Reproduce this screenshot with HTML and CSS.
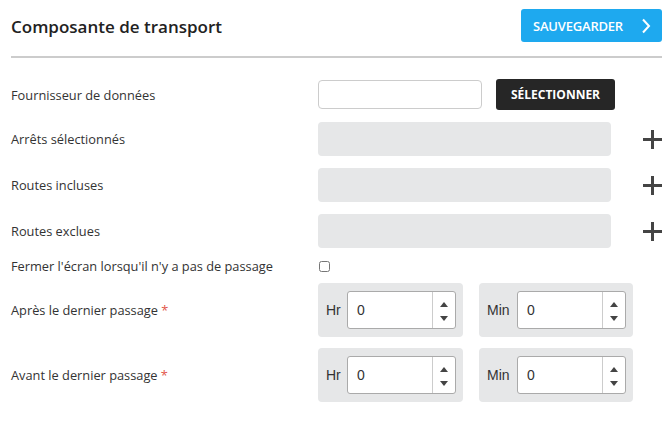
FILE: index.html
```html
<!doctype html>
<html lang="fr">
<head>
  <meta charset="utf-8">
  <title>Composante de transport</title>
  <link rel="stylesheet" href="styles.css">
</head>
<body>
  <div class="panel">
    <div class="panel-head">
      <div class="panel-title">Composante de transport</div>
      <button class="btn-save">SAUVEGARDER
        <svg width="10" height="16" viewBox="0 0 10 16"><path d="M2 1.5 L8 8 L2 14.5" fill="none" stroke="#fff" stroke-width="2"/></svg>
      </button>
    </div>

    <div class="form">
      <div class="row row-provider">
        <label>Fournisseur de données</label>
        <div class="ctrl">
          <input class="text-input" type="text">
          <button class="btn-select">SÉLECTIONNER</button>
        </div>
      </div>

      <div class="row row-list">
        <label>Arrêts sélectionnés</label>
        <div class="ctrl">
          <div class="list-box"></div>
          <span class="plus"></span>
        </div>
      </div>

      <div class="row row-list">
        <label>Routes incluses</label>
        <div class="ctrl">
          <div class="list-box"></div>
          <span class="plus"></span>
        </div>
      </div>

      <div class="row row-list">
        <label>Routes exclues</label>
        <div class="ctrl">
          <div class="list-box"></div>
          <span class="plus"></span>
        </div>
      </div>

      <div class="row row-check">
        <label>Fermer l'écran lorsqu'il n'y a pas de passage</label>
        <div class="ctrl">
          <input type="checkbox" class="check">
        </div>
      </div>

      <div class="row row-time">
        <label>Après le dernier passage <span class="req">*</span></label>
        <div class="ctrl">
          <div class="time-group">
            <span class="unit">Hr</span>
            <div class="spin"><input value="0"><div class="spin-btns"><span class="up"></span><span class="down"></span></div></div>
          </div>
          <div class="time-group">
            <span class="unit">Min</span>
            <div class="spin"><input value="0"><div class="spin-btns"><span class="up"></span><span class="down"></span></div></div>
          </div>
        </div>
      </div>

      <div class="row row-time">
        <label>Avant le dernier passage <span class="req">*</span></label>
        <div class="ctrl">
          <div class="time-group">
            <span class="unit">Hr</span>
            <div class="spin"><input value="0"><div class="spin-btns"><span class="up"></span><span class="down"></span></div></div>
          </div>
          <div class="time-group">
            <span class="unit">Min</span>
            <div class="spin"><input value="0"><div class="spin-btns"><span class="up"></span><span class="down"></span></div></div>
          </div>
        </div>
      </div>
    </div>
  </div>
</body>
</html>
```

FILE: styles.css
```css
html, body {
  margin: 0;
  padding: 0;
  background: #fff;
}
body {
  font-family: 'Open Sans', Arial, sans-serif;
  color: #333;
  font-size: 12.8px;
}
.panel {
  padding: 9px 8px 0 11px;
}
.panel-head {
  display: flex;
  align-items: center;
  justify-content: space-between;
  height: 33px;
  padding-bottom: 14px;
  border-bottom: 2px solid #ccc;
}
.panel-title {
  font-size: 17px;
  font-weight: 600;
  color: #222;
  padding-top: 1px;
}
.btn-save {
  display: flex;
  align-items: center;
  justify-content: space-between;
  width: 141px;
  height: 33px;
  padding: 0 11px 0 12px;
  border: none;
  border-radius: 3px;
  background: #1ea9ef;
  color: #fff;
  font-family: 'Open Sans', Arial, sans-serif;
  font-size: 13px;
  font-weight: 600;
  letter-spacing: -0.2px;
}
.form {
  padding-top: 21px;
}
.row {
  display: flex;
  align-items: center;
}
.row label {
  width: 307px;
  flex: none;
}
.ctrl {
  display: flex;
  align-items: center;
}
.row-provider {
  height: 31px;
  margin-bottom: 12px;
}
.text-input {
  width: 164px;
  height: 29px;
  box-sizing: border-box;
  border: 1px solid #ccc;
  border-radius: 4px;
  margin: 0;
}
.btn-select {
  margin-left: 14px;
  height: 31px;
  width: 119px;
  border: none;
  border-radius: 3px;
  background: #262626;
  color: #fff;
  font-family: 'Open Sans', Arial, sans-serif;
  font-size: 12px;
  font-weight: 700;
}
.row-list {
  height: 34px;
  margin-bottom: 12px;
}
.list-box {
  width: 293px;
  height: 34px;
  background: #e6e7e8;
  border-radius: 4px;
}
.plus {
  position: relative;
  width: 19px;
  height: 19px;
  margin-left: 32px;
}
.plus::before, .plus::after {
  content: "";
  position: absolute;
  background: #444;
}
.plus::before {
  left: 0; right: 0; top: 8px; height: 3px;
}
.plus::after {
  top: 0; bottom: 0; left: 8px; width: 3px;
}
.row-check {
  margin-top: -5px;
  height: 22px;
  margin-bottom: 6px;
}
.check {
  margin: 0 0 0 1px;
  width: 11px;
  height: 11px;
}
.row-time {
  height: 54px;
  margin-bottom: 11px;
}
.req {
  color: #e2574c;
}
.time-group {
  display: flex;
  align-items: center;
  height: 54px;
  box-sizing: border-box;
  padding: 0 7px 0 8px;
  background: #e6e7e8;
  border-radius: 4px;
  margin-right: 16px;
  font-family: 'Liberation Sans', Arial, sans-serif;
  font-size: 14px;
  color: #333;
}
.unit {
  width: 21px;
}
.time-group:last-child .unit {
  width: 30px;
}
.spin {
  display: flex;
  width: 109px;
  height: 38px;
  box-sizing: border-box;
  border: 1px solid #aaa;
  border-radius: 3px;
  background: #fff;
}
.spin input {
  flex: 1;
  min-width: 0;
  border: none;
  outline: none;
  padding: 0 0 0 9px;
  font-family: 'Liberation Sans', Arial, sans-serif;
  font-size: 14px;
  color: #333;
  background: transparent;
}
.spin-btns {
  width: 22px;
  border-left: 1px solid #ccc;
  display: flex;
  flex-direction: column;
  align-items: center;
  justify-content: space-between;
  padding: 10px 0 7px;
}
.up, .down {
  width: 0;
  height: 0;
  border-left: 4px solid transparent;
  border-right: 4px solid transparent;
}
.up {
  border-bottom: 5px solid #444;
}
.down {
  border-top: 5px solid #444;
}
```
